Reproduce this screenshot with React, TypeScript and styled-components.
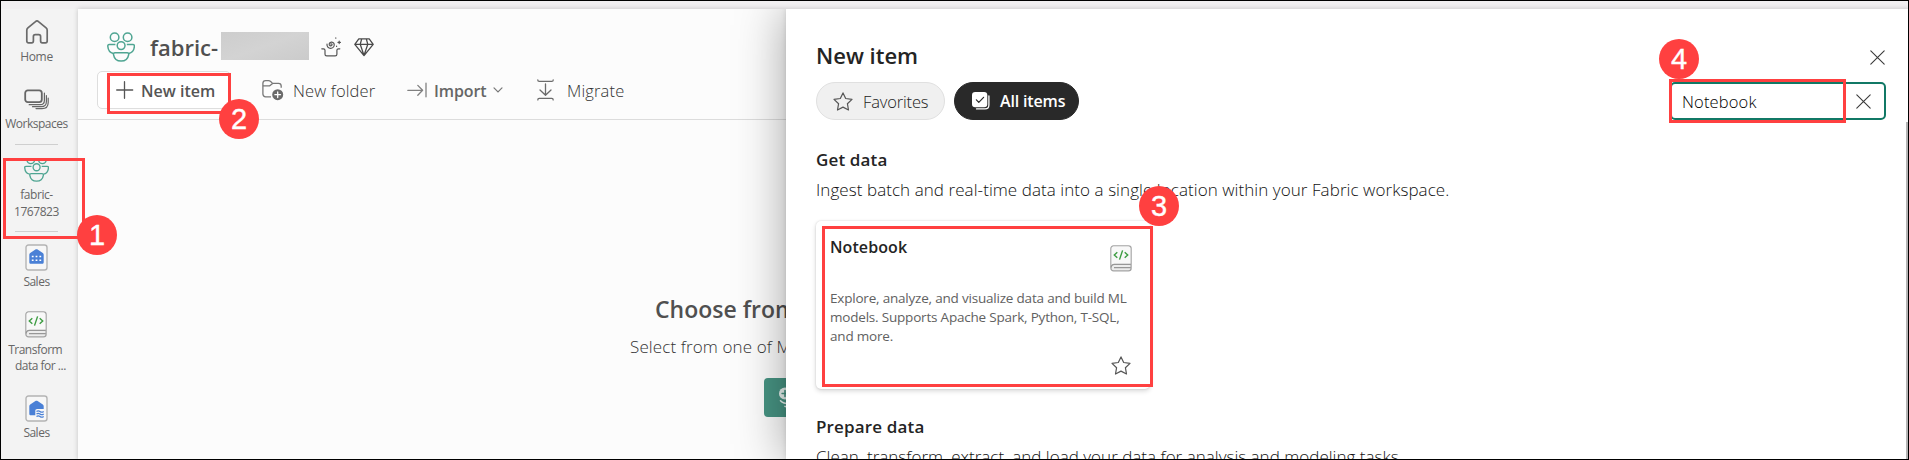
import React from "react";
import styled, { createGlobalStyle, css } from "styled-components";

const GlobalStyle = createGlobalStyle`
  *, *::before, *::after { box-sizing: border-box; }
  body { margin: 0; font-family: "Open Sans", "Noto Sans", sans-serif; }
  svg { display: block; flex: none; }
`;

const Frame = styled.div`
  position: relative;
  display: flex;
  flex-direction: column;
  width: 1909px;
  height: 460px;
  overflow: hidden;
  background: #f3f3f3;
`;

const FrameEdge = styled.div`
  position: absolute;
  inset: 0;
  border: 1px solid #000;
  pointer-events: none;
`;

const TopStrip = styled.div`
  flex: none;
  height: 9px;
  background: #f1eff1;
`;

const Body = styled.div`
  display: flex;
  flex: 1;
  min-height: 0;
`;

/* ---------- left rail ---------- */

const Rail = styled.nav`
  flex: none;
  display: flex;
  flex-direction: column;
  align-items: center;
  width: 78px;
  padding: 0 6px 0 1px;
  background: #f3f3f3;
`;

const RailItem = styled.div<{ $top: number; $gap: number }>`
  flex: none;
  display: flex;
  flex-direction: column;
  align-items: center;
  margin-top: ${(p) => p.$top}px;
  gap: ${(p) => p.$gap}px;
`;

const RailLabel = styled.div<{ $spacing?: number; $line?: number }>`
  font-size: 12px;
  font-weight: 400;
  line-height: ${(p) => p.$line ?? 16}px;
  letter-spacing: ${(p) => p.$spacing ?? -0.5}px;
  color: #666;
  text-align: center;
  white-space: pre;
`;

const RailDivider = styled.div<{ $top: number }>`
  flex: none;
  width: 43px;
  height: 1px;
  margin-top: ${(p) => p.$top}px;
  background: #cfcfcf;
`;

const ScrolledIcon = styled.div`
  display: flex;
  align-items: flex-end;
  height: 21px;
  overflow: hidden;
`;

/* ---------- workspace ---------- */

const Workspace = styled.main`
  flex: 1;
  min-width: 0;
  background: #fcfcfc;
  box-shadow: 0 0 5px rgba(0, 0, 0, 0.2);
`;

const WorkspaceTitle = styled.div`
  display: flex;
  align-items: center;
  height: 62px;
  padding: 14px 0 0 29px;
`;

const WorkspaceName = styled.h1`
  width: 71px;
  margin: 0 0 0 15px;
  font-size: 22px;
  font-weight: 600;
  line-height: 30px;
  color: #505050;
  white-space: nowrap;
`;

const Redacted = styled.div`
  width: 88px;
  height: 28px;
  margin: -3px 12px 0 0;
  background: linear-gradient(160deg, #cdcdcd, #d3d3d3 50%, #cbcbcb);
`;

const TitleIcons = styled.div`
  display: flex;
  align-items: center;
  gap: 12px;
`;

const Toolbar = styled.div`
  display: flex;
  height: 49px;
  padding: 0 0 10px 19px;
  border-bottom: 1px solid #dcdcdc;
`;

const Command = styled.button<{ $width?: number; $gap: number; $strong?: boolean; $spacing?: number }>`
  flex: none;
  display: flex;
  align-items: center;
  gap: ${(p) => p.$gap}px;
  width: ${(p) => (p.$width ? `${p.$width}px` : "auto")};
  height: 38px;
  padding: 0;
  border: 0;
  background: none;
  font-family: inherit;
  font-size: ${(p) => (p.$strong ? 16 : 16.5)}px;
  font-weight: ${(p) => (p.$strong ? 600 : 300)};
  line-height: 22px;
  letter-spacing: ${(p) => p.$spacing ?? 0}px;
  color: ${(p) => (p.$strong ? "#666" : "#333")};
  white-space: nowrap;
`;

const CommandLabel = styled.span`
  padding-top: 1px;
`;

const PrimaryCommand = styled(Command)`
  margin-right: 31px;
  padding-left: 18px;
  border: 1px solid #dedede;
  border-radius: 5px;
  background: #fff;
  color: #555;
`;

const EmptyState = styled.section`
  padding: 174px 0 0 552px;
  white-space: nowrap;
`;

const EmptyTitle = styled.h2`
  margin: 0 0 12px 25px;
  font-size: 23px;
  font-weight: 600;
  line-height: 30px;
  color: #505050;
`;

const EmptyText = styled.p`
  margin: 0 0 20px;
  font-size: 17px;
  font-weight: 300;
  line-height: 22px;
  letter-spacing: 0.12px;
  color: #333;
`;

const GreenButton = styled.div`
  display: flex;
  align-items: center;
  width: 200px;
  height: 39px;
  margin-left: 134px;
  padding-left: 14px;
  border-radius: 4px;
  background: #479483;
`;

/* ---------- side panel ---------- */

const Panel = styled.aside`
  position: absolute;
  top: 9px;
  left: 786px;
  right: 0;
  bottom: 0;
  padding: 0 23px 0 30px;
  background: #fff;
  box-shadow: 0 0 46px rgba(0, 0, 0, 0.36), 0 0 5px rgba(0, 0, 0, 0.12);
  clip-path: inset(0 0 0 -60px);
`;

const PanelHeader = styled.header`
  display: flex;
  align-items: center;
  justify-content: space-between;
  height: 73px;
  padding: 31px 1px 12px 0;
`;

const PanelTitle = styled.h2`
  margin: 0;
  font-size: 22px;
  font-weight: 600;
  line-height: 30px;
  color: #242424;
`;

const CloseSlot = styled.div`
  padding-top: 5px;
`;

const PanelTools = styled.div`
  display: flex;
  height: 38px;
`;

const Pill = styled.button<{ $active?: boolean; $width: number }>`
  display: flex;
  align-items: center;
  width: ${(p) => p.$width}px;
  height: 38px;
  margin: 0 9px 0 0;
  padding: 0 0 0 16px;
  border: 1px solid #e0e0e0;
  border-radius: 19px;
  background: #f0f0f0;
  font-family: inherit;
  font-size: 16.5px;
  font-weight: 300;
  letter-spacing: -0.15px;
  color: #222;
  white-space: nowrap;
  ${(p) =>
    p.$active &&
    css`
      padding-left: 17px;
      border-color: #292929;
      background: #292929;
      font-size: 16px;
      font-weight: 600;
      letter-spacing: -0.15px;
      color: #fff;
    `}
`;

const PillLabel = styled.span`
  margin-left: 10px;
`;

const SearchBox = styled.div`
  display: flex;
  align-items: center;
  justify-content: space-between;
  width: 216px;
  height: 38px;
  margin-left: auto;
  padding: 0 13px 0 10px;
  border: 2px solid #117865;
  border-radius: 5px;
  font-size: 16.5px;
  font-weight: 300;
  letter-spacing: 0.15px;
  color: #000;
`;

const SectionTitle = styled.h3<{ $top: number }>`
  margin: ${(p) => p.$top}px 0 8px;
  font-size: 17px;
  font-weight: 600;
  line-height: 22px;
  letter-spacing: 0.15px;
  color: #242424;
`;

const SectionText = styled.p<{ $spacing: number }>`
  margin: 0;
  font-size: 17px;
  font-weight: 300;
  line-height: 22px;
  letter-spacing: ${(p) => p.$spacing}px;
  color: #111;
  white-space: nowrap;
`;

const Card = styled.article`
  display: flex;
  justify-content: space-between;
  width: 334px;
  height: 168px;
  margin-top: 20px;
  padding: 15px 18px 14px 14px;
  border-radius: 5px;
  background: #fff;
  box-shadow: 0 0 2px rgba(0, 0, 0, 0.14), 0 2px 5px rgba(0, 0, 0, 0.16);
`;

const CardBody = styled.div`
  width: 280px;
`;

const CardTitle = styled.h4`
  margin: 0 0 31px;
  font-size: 16px;
  font-weight: 600;
  line-height: 22px;
  letter-spacing: 0.08px;
  color: #242424;
`;

const CardText = styled.p`
  margin: 0;
  font-size: 13.5px;
  font-weight: 400;
  line-height: 19px;
  letter-spacing: -0.2px;
  color: #616161;
  white-space: nowrap;
`;

const CardAside = styled.div`
  flex: none;
  display: flex;
  flex-direction: column;
  justify-content: space-between;
  align-items: center;
  width: 22px;
  padding-top: 9px;
`;

const ScrollThumb = styled.div`
  position: absolute;
  top: 113px;
  right: 1px;
  bottom: 0;
  width: 2px;
  background: #b4b4b4;
`;

/* ---------- step annotations ---------- */

const Outline = styled.div<{ $x: number; $y: number; $w: number; $h: number }>`
  position: absolute;
  left: ${(p) => p.$x}px;
  top: ${(p) => p.$y}px;
  width: ${(p) => p.$w}px;
  height: ${(p) => p.$h}px;
  border: 3px solid #ff4040;
`;

const StepBadge = styled.div<{ $x: number; $y: number }>`
  position: absolute;
  left: ${(p) => p.$x - 20}px;
  top: ${(p) => p.$y - 20}px;
  width: 40px;
  height: 40px;
  border-radius: 50%;
  background: #ff4040;
  color: #fff;
  font-family: "Liberation Sans", Arial, sans-serif;
  font-size: 29px;
  line-height: 41px;
  text-align: center;
  -webkit-text-stroke: 0.4px #fff;
`;

/* ---------- icons ---------- */

const PeopleIcon = ({ w = 28, h = 30, sw = 1.5 }: { w?: number; h?: number; sw?: number }) => (
  <svg width={w} height={h} viewBox="0 0 28 30" fill="none" stroke="#4fa592" strokeWidth={sw} strokeLinejoin="round">
    <circle cx="7.6" cy="5.2" r="4.3" />
    <circle cx="20.6" cy="5.2" r="4.3" />
    <circle cx="14.1" cy="13.6" r="3.9" />
    <path d="M8.4 12.6H2.2c-1 0-1.5.6-1.4 1.6.3 4 2.6 6.7 5.600 7.200" />
    <path d="M19.800 12.6h6.200c1 0 1.500.6 1.400 1.600-.3 4-2.600 6.700-5.600 7.200" />
    <path d="M8 20.800h12.200c1.100 0 1.700.7 1.500 1.800-.7 4-3.700 6.500-7.600 6.500s-6.900-2.500-7.600-6.500c-.2-1.100.4-1.800 1.500-1.800Z" />
  </svg>
);

const HomeIcon = () => (
  <svg width="24" height="24" viewBox="0 0 24 24" fill="none" stroke="#6a6a6a" strokeWidth="1.700" strokeLinejoin="round">
    <path d="M1.800 10.200c0-.9.4-1.700 1.100-2.300l7.600-6.300c.9-.8 2.100-.8 3 0l7.600 6.300c.7.600 1.100 1.400 1.100 2.300v10.900c0 1-.7 1.700-1.700 1.700h-3.200c-1 0-1.700-.7-1.700-1.700v-4.600c0-1-.8-1.800-1.800-1.800h-3.600c-1 0-1.800.8-1.800 1.800v4.600c0 1-.7 1.700-1.700 1.700H3.500c-1 0-1.700-.7-1.700-1.700Z" />
  </svg>
);

const WorkspacesIcon = () => (
  <svg width="25" height="21" viewBox="0 0 25 21" fill="none" stroke="#666" strokeLinecap="round">
    <rect x="1.200" y="1.300" width="16.600" height="11.800" rx="2.600" strokeWidth="1.800" />
    <path d="M20.400 4v7.500c0 2.600-1.600 4.200-4.200 4.200H5.200M22.400 6.500v6c0 3.200-2.200 5.200-5.200 5.200H8.500M24.200 9v4.500c0 3.800-2.400 6.100-6.200 6.100h-6" strokeWidth="1.200" />
  </svg>
);

const TileFrame = ({ children }: { children: React.ReactNode }) => (
  <svg width="23" height="27" viewBox="0 0 23 27" fill="none">
    <rect x="1" y="1" width="21" height="25" rx="2.500" fill="#f7f7f7" stroke="#b4b4b4" strokeWidth="1.400" />
    {children}
  </svg>
);

const ModelIcon = () => (
  <TileFrame>
    <path d="M4.300 10.800c0-.8.300-1.300.9-1.700l5.200-3.500c.7-.5 1.500-.5 2.200 0l5.200 3.500c.6.400.9.900.9 1.700v7.400c0 1-.6 1.600-1.600 1.600H5.900c-1 0-1.600-.6-1.600-1.600Z" fill="#4a80d6" />
    <path d="M6.800 12.600h1.800m2 0h1.800m2 0h1.800M6.800 16.300h1.800m2 0h1.800m2 0h1.800" stroke="#fff" strokeWidth="1.500" />
  </TileFrame>
);

const LakehouseIcon = () => (
  <TileFrame>
    <path d="M4.300 11.200c0-.8.300-1.300.9-1.700l5.200-3.500c.7-.5 1.500-.5 2.200 0l5.200 3.500c.6.400.9.900.9 1.700v2.700h-6.500c-1.200 0-1.900.7-1.900 1.900v4.500H5.900c-1 0-1.600-.6-1.600-1.600Z" fill="#4a80d6" />
    <path d="M11.500 16.500c1.200-1 2.300-1 3.500 0s2.400 1 3.700 0M11.500 19c1.200-1 2.300-1 3.500 0s2.400 1 3.700 0M11.500 21.500c1.200-1 2.300-1 3.500 0s2.400 1 3.700 0" stroke="#4a80d6" strokeWidth="1.200" />
  </TileFrame>
);

const NotebookIcon = () => (
  <svg width="22" height="27" viewBox="0 0 22 27" fill="none">
    <rect x="0.900" y="0.900" width="20.200" height="25" rx="2.600" fill="#ececec" stroke="#a4a4a4" strokeWidth="1.300" />
    <path d="M1.600 21V3.500c0-1.200.8-1.900 1.900-1.900h15c1.100 0 1.900.7 1.900 1.900v15.300H4.500c-1.400 0-2.500.9-2.900 2.200Z" fill="#f8f8f8" />
    <path d="M1.200 22.500c0-2 1.300-3.200 3.300-3.200h16.300M4 22.600h16.800" stroke="#979797" strokeWidth="1.300" />
    <path d="M7.300 7.300 4.300 10l3 2.700M14.700 7.300l3 2.700-3 2.700M12.600 5.400 9.500 14.600" stroke="#3c9c41" strokeWidth="1.400" />
  </svg>
);

const SparkTrayIcon = () => (
  <svg width="21" height="20" viewBox="0 0 21 20" fill="none" stroke="#555" strokeWidth="1.200" strokeLinecap="round" strokeLinejoin="round">
    <path d="M.8 11.800h1.600c1 0 1.600.5 1.600 1.400v4c0 1.100.6 1.700 1.700 1.700h8.500c1.100 0 1.700-.6 1.700-1.700v-4c0-.9.600-1.400 1.600-1.400h1.300" />
    <path d="M9.800 7c.9-.6 1.700.5 1 1.300-1 1.100-2.900.2-2.600-1.400.4-2.200 3.600-2.500 4.700-.5 1.200 2.300-.6 5-3.300 4.900-2.300-.1-3.900-1.900-3.600-4.200" />
    <path d="M18.200 4.200v2.400M17 5.400h2.400M14.800.9v.3M15.600 9.200v.3" />
  </svg>
);

const DiamondIcon = () => (
  <svg width="20" height="20" viewBox="0 0 20 20" fill="none" stroke="#4a4a4a" strokeWidth="1.300" strokeLinejoin="round">
    <path d="M4.800 1.800h10.400l4 5.500L10 18.600.8 7.300ZM.8 7.300h18.400M6.200 7.300 10 18.400l3.800-11.100M6.200 7.300l1.500-5.500M13.800 7.300l-1.500-5.500" />
  </svg>
);

const PlusIcon = () => (
  <svg width="18" height="18" viewBox="0 0 18 18" stroke="#555" strokeWidth="1.300" strokeLinecap="round">
    <path d="M8.500 .7v16.600M.7 9h16" />
  </svg>
);

const NewFolderIcon = () => (
  <svg width="22" height="22" viewBox="0 0 22 22" fill="none" stroke="#777" strokeWidth="1.300" strokeLinejoin="round">
    <path d="M9 17.800H3.600C2 17.800.9 16.700.9 15.100V4.300c0-1.600 1.100-2.700 2.700-2.700h3c.7 0 1.300.2 1.800.7L10.600 4.400h5.900c1.600 0 2.700 1.100 2.700 2.700v1.700" />
    <path d="M.9 6.900h5.700c.7 0 1.300-.2 1.800-.7l2.200-1.800" />
    <circle cx="15.700" cy="15.700" r="5.500" fill="#6a6a6a" stroke="none" />
    <path d="M15.700 12.900v5.600M12.900 15.700h5.600" stroke="#fff" strokeLinecap="round" />
  </svg>
);

const ImportIcon = () => (
  <svg width="21" height="16" viewBox="0 0 21 16" fill="none" stroke="#808080" strokeWidth="1.300" strokeLinecap="round" strokeLinejoin="round">
    <path d="M.8 8.300h14.600M10.800 3.400l4.800 4.900-4.800 4.900M19 1.200v13.600" />
  </svg>
);

const ChevronIcon = () => (
  <svg width="10" height="6" viewBox="0 0 10 6" fill="none" stroke="#777" strokeWidth="1.200" strokeLinecap="round">
    <path d="m1 .9 4 4 4-4" />
  </svg>
);

const MigrateIcon = () => (
  <svg width="17" height="22" viewBox="0 0 17 22" fill="none" stroke="#6c6c6c" strokeWidth="1.300" strokeLinecap="round" strokeLinejoin="round">
    <path d="M.8.9c0 1 .4 1.500 1.400 1.500h12.600c1 0 1.400-.5 1.400-1.500M.8 20.900c0-1 .4-1.500 1.400-1.500h12.600c1 0 1.400.5 1.400 1.500M8.500 5v11M3 11l5.500 5.300L14 11" />
  </svg>
);

const StackPlusIcon = () => (
  <svg width="26" height="24" viewBox="0 0 26 24" fill="none" stroke="#e9f3f0" strokeWidth="1.600" strokeLinecap="round">
    <circle cx="7" cy="7.500" r="6" fill="#e9f3f0" stroke="none" />
    <path d="M7 4.600v5.800M4.100 7.500h5.800" stroke="#479483" />
    <path d="M2.500 14.800c2 2 5 3 8.500 3h10M7 20.400c2 1 4 1.500 7 1.500h7" />
  </svg>
);

const StarIcon = () => (
  <svg width="20" height="19" viewBox="0 0 20 19" fill="none" stroke="#555" strokeWidth="1.200" strokeLinejoin="round">
    <path d="m10 .9 2.700 5.600 6.300.9-4.600 4.300 1.100 6.300-5.500-2.900L4.500 18l1.100-6.300L1 7.400l6.300-.9Z" />
  </svg>
);

const AllItemsIcon = () => (
  <svg width="18" height="18" viewBox="0 0 18 18" fill="none" strokeLinecap="round" strokeLinejoin="round">
    <path d="M16.900 4v9c0 2.500-1.400 3.900-3.900 3.900H4.500" stroke="#fff" strokeWidth="1.300" />
    <rect x="0" y="0" width="15.300" height="15.300" rx="3.200" fill="#fff" />
    <path d="m4.400 7.800 2.400 2.500 4.800-5" stroke="#292929" strokeWidth="1.200" />
  </svg>
);

const CloseIcon = () => (
  <svg width="15" height="15" viewBox="0 0 15 15" stroke="#3a3a3a" strokeWidth="1.100" strokeLinecap="round">
    <path d="m.8.8 13.400 13.400M14.200.8.8 14.200" />
  </svg>
);

/* ---------- page ---------- */

const SideRail = () => (
  <Rail>
    <RailItem $top={11} $gap={5}>
      <HomeIcon />
      <RailLabel $spacing={-0.3}>Home</RailLabel>
    </RailItem>
    <RailItem $top={24} $gap={6}>
      <WorkspacesIcon />
      <RailLabel>Workspaces</RailLabel>
    </RailItem>
    <RailDivider $top={12} />
    <RailItem $top={16} $gap={4}>
      <ScrolledIcon>
        <PeopleIcon w={25} h={27} />
      </ScrolledIcon>
      <RailLabel $line={17} $spacing={-0.45}>{"fabric-\n1767823"}</RailLabel>
    </RailItem>
    <RailDivider $top={11} />
    <RailItem $top={12} $gap={3}>
      <ModelIcon />
      <RailLabel $spacing={-0.5}>Sales</RailLabel>
    </RailItem>
    <RailItem $top={21} $gap={4}>
      <NotebookIcon />
      <RailLabel $spacing={-0.5}>{"Transform \n   data for ..."}</RailLabel>
    </RailItem>
    <RailItem $top={21} $gap={3}>
      <LakehouseIcon />
      <RailLabel $spacing={-0.5}>Sales</RailLabel>
    </RailItem>
  </Rail>
);

const WorkspaceView = () => (
  <Workspace>
    <WorkspaceTitle>
      <PeopleIcon />
      <WorkspaceName>fabric-</WorkspaceName>
      <Redacted />
      <TitleIcons>
        <SparkTrayIcon />
        <DiamondIcon />
      </TitleIcons>
    </WorkspaceTitle>
    <Toolbar>
      <PrimaryCommand $width={134} $gap={7} $strong>
        <PlusIcon />
        <CommandLabel>New item</CommandLabel>
      </PrimaryCommand>
      <Command $width={145} $gap={9} $spacing={0.15}>
        <NewFolderIcon />
        <CommandLabel>New folder</CommandLabel>
      </Command>
      <Command $width={130} $gap={6} $strong $spacing={-0.1}>
        <ImportIcon />
        <CommandLabel>Import</CommandLabel>
        <ChevronIcon />
      </Command>
      <Command $gap={13} $spacing={0.15}>
        <MigrateIcon />
        <CommandLabel>Migrate</CommandLabel>
      </Command>
    </Toolbar>
    <EmptyState>
      <EmptyTitle>Choose from</EmptyTitle>
      <EmptyText>Select from one of M</EmptyText>
      <GreenButton>
        <StackPlusIcon />
      </GreenButton>
    </EmptyState>
  </Workspace>
);

const NewItemPanel = () => (
  <Panel>
    <PanelHeader>
      <PanelTitle>New item</PanelTitle>
      <CloseSlot>
        <CloseIcon />
      </CloseSlot>
    </PanelHeader>
    <PanelTools>
      <Pill $width={129}>
        <StarIcon />
        <PillLabel>Favorites</PillLabel>
      </Pill>
      <Pill $active $width={125}>
        <AllItemsIcon />
        <PillLabel>All items</PillLabel>
      </Pill>
      <SearchBox>
        Notebook
        <CloseIcon />
      </SearchBox>
    </PanelTools>
    <SectionTitle $top={29}>Get data</SectionTitle>
    <SectionText $spacing={0.065}>
      Ingest batch and real-time data into a single location within your Fabric workspace.
    </SectionText>
    <Card>
      <CardBody>
        <CardTitle>Notebook</CardTitle>
        <CardText>
          Explore, analyze, and visualize data and build ML
          <br />
          models. Supports Apache Spark, Python, T-SQL,
          <br />
          and more.
        </CardText>
      </CardBody>
      <CardAside>
        <NotebookIcon />
        <StarIcon />
      </CardAside>
    </Card>
    <SectionTitle $top={27}>Prepare data</SectionTitle>
    <SectionText $spacing={0.015}>
      Clean, transform, extract, and load your data for analysis and modeling tasks.
    </SectionText>
    <ScrollThumb />
  </Panel>
);

export default function App() {
  return (
    <>
      <GlobalStyle />
      <Frame>
        <TopStrip />
        <Body>
          <SideRail />
          <WorkspaceView />
        </Body>
        <NewItemPanel />
        <Outline $x={3} $y={158} $w={82} $h={81} />
        <StepBadge $x={97} $y={235}>1</StepBadge>
        <Outline $x={107} $y={73} $w={124} $h={41} />
        <StepBadge $x={239} $y={119}>2</StepBadge>
        <Outline $x={822} $y={226} $w={331} $h={161} />
        <StepBadge $x={1159} $y={206}>3</StepBadge>
        <Outline $x={1669} $y={79} $w={177} $h={44} />
        <StepBadge $x={1679} $y={59}>4</StepBadge>
        <FrameEdge />
      </Frame>
    </>
  );
}
